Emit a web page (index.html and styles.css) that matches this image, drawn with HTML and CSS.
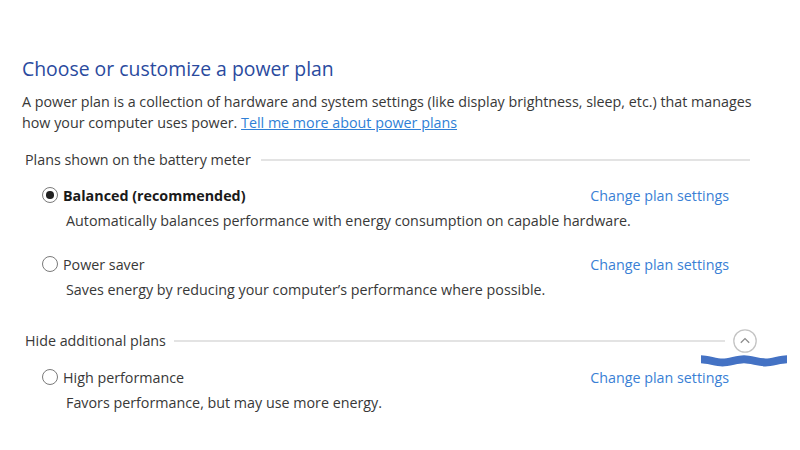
FILE: index.html
```html
<!DOCTYPE html>
<html>
<head>
<meta charset="utf-8">
<link rel="stylesheet" href="styles.css">
</head>
<body>
<div class="page">
  <h1 class="title">Choose or customize a power plan</h1>
  <p class="intro">A power plan is a collection of hardware and system settings (like display brightness, sleep, etc.) that manages how your computer uses power. <a class="link" href="#">Tell me more about power plans</a></p>

  <div class="group-head">
    <span class="group-label">Plans shown on the battery meter</span>
    <span class="rule"></span>
  </div>

  <div class="plan">
    <div class="plan-row">
      <span class="radio checked"></span>
      <span class="plan-name bold">Balanced (recommended)</span>
      <a class="change" href="#">Change plan settings</a>
    </div>
    <div class="plan-desc">Automatically balances performance with energy consumption on capable hardware.</div>
  </div>

  <div class="plan">
    <div class="plan-row">
      <span class="radio"></span>
      <span class="plan-name">Power saver</span>
      <a class="change" href="#">Change plan settings</a>
    </div>
    <div class="plan-desc">Saves energy by reducing your computer’s performance where possible.</div>
  </div>

  <div class="group-head group-head2">
    <span class="group-label">Hide additional plans</span>
    <span class="rule"></span>
    <span class="collapse">
      <svg width="24" height="24" viewBox="0 0 24 24"><circle cx="12" cy="12" r="11.2" fill="none" stroke="#c4c4c4" stroke-width="1.3"/><path d="M7.8 13.8 L12 9.6 L16.2 13.8" fill="none" stroke="#8c8c8c" stroke-width="1.3"/></svg>
      <svg class="wave" width="86" height="12" viewBox="0 0 86 12"><path d="M0 4.2 C7 4.2 14.5 7.4 21.5 7.4 S36 4.2 43 4.2 S57.5 7.4 64.5 7.4 S79 4.2 86 4.2" fill="none" stroke="#4472c4" stroke-width="8"/></svg>
    </span>
  </div>

  <div class="plan plan3">
    <div class="plan-row">
      <span class="radio"></span>
      <span class="plan-name">High performance</span>
      <a class="change" href="#">Change plan settings</a>
    </div>
    <div class="plan-desc">Favors performance, but may use more energy.</div>
  </div>
</div>
</body>
</html>
```
FILE: styles.css
```css
html, body {
  margin: 0;
  padding: 0;
  background: #ffffff;
}
body {
  font-family: "Open Sans", "Noto Sans", "Liberation Sans", sans-serif;
  color: #383838;
  font-size: 14.3px;
}
.page {
  padding: 56px 0 0 22px;
  width: 742px;
}
.title {
  margin: 0;
  font-weight: 400;
  font-size: 19.4px;
  line-height: 26px;
  color: #2a4a9e;
}
.intro {
  margin: 9px 0 0 0;
  line-height: 21px;
}
.link {
  color: #2f7fd6;
  text-decoration: underline;
}
.group-head {
  display: flex;
  align-items: center;
  width: 728px;
  margin-top: 17px;
  padding-left: 3px;
  box-sizing: border-box;
  gap: 10px;
}
.group-label {
  line-height: 20px;
}
.rule {
  flex: 1;
  height: 2px;
  background: #e3e3e3;
}
.group-head2 {
  width: 735px;
  margin-top: 29px;
  gap: 8px;
}
.collapse {
  position: relative;
  width: 24px;
  height: 24px;
}
.collapse svg {
  display: block;
}
.wave {
  position: absolute;
  left: -32px;
  top: 26px;
}
.plan {
  margin-top: 15px;
  padding-left: 20px;
  width: 687px;
}
.plan + .plan {
  margin-top: 23px;
}
.plan3 {
  margin-top: 14px;
}
.plan-row {
  display: flex;
  align-items: center;
  height: 20px;
}
.radio {
  width: 16px;
  height: 16px;
  border: 1.2px solid #7a7a7a;
  border-radius: 50%;
  box-sizing: border-box;
  margin-right: 5px;
  position: relative;
}
.radio.checked::after {
  content: "";
  position: absolute;
  left: 3px;
  top: 3px;
  width: 7.6px;
  height: 7.6px;
  border-radius: 50%;
  background: #222;
}
.plan-name.bold {
  font-weight: 700;
  color: #1a1a1a;
}
.change {
  margin-left: auto;
  color: #3a7fd5;
  text-decoration: none;
}
.plan-desc {
  margin-top: 6px;
  padding-left: 24px;
  line-height: 20px;
}
```
